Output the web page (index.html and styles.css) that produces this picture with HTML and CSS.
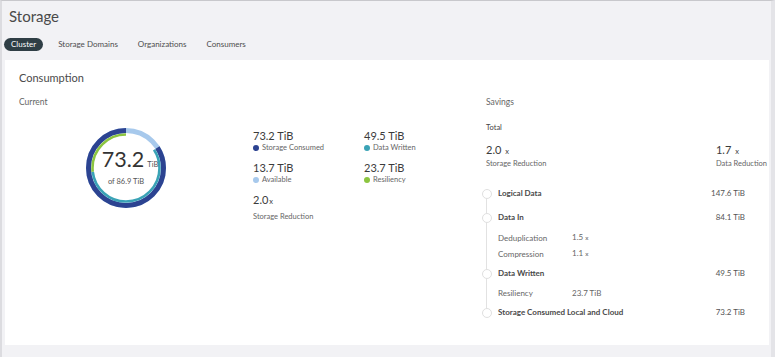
FILE: index.html
```html
<!DOCTYPE html>
<html lang="en">
<head>
    <title>Storage</title>
    <meta charset="utf-8" />
    <link rel="stylesheet" href="styles.css">
</head>
<body>

<div class="page">
    <h1 class="title">Storage</h1>
    <ul class="tabs">
        <li class="cur">Cluster</li>
        <li>Storage Domains</li>
        <li>Organizations</li>
        <li>Consumers</li>
    </ul>

    <div class="card">
        <h2 class="card-title">Consumption</h2>
        <div class="cols">
            <div class="current">
                <p class="sub">Current</p>
                <div class="current-body">
                    <div class="donut">
                        <svg width="80" height="80" viewBox="0 0 80 80">
                            <!-- outer: available + consumed -->
                            <circle cx="40" cy="40" r="37.5" fill="none" stroke="#a7c9ec" stroke-width="5"
                                    stroke-dasharray="235.6 0" transform="rotate(-90 40 40)"/>
                            <circle cx="40" cy="40" r="37.5" fill="none" stroke="#2c4391" stroke-width="5"
                                    stroke-dasharray="198.4 300" stroke-dashoffset="-37.2" transform="rotate(-90 40 40)"/>
                            <!-- inner: written + resiliency -->
                            <circle cx="40" cy="40" r="33.5" fill="none" stroke="#3aa3b6" stroke-width="2.6"
                                    stroke-dasharray="120.6 300" stroke-dashoffset="-33.2" transform="rotate(-90 40 40)"/>
                            <circle cx="40" cy="40" r="33.5" fill="none" stroke="#8cc540" stroke-width="2.6"
                                    stroke-dasharray="56.6 300" stroke-dashoffset="-153.8" transform="rotate(-90 40 40)"/>
                        </svg>
                        <div class="donut-text">
                            <p class="big">73.2<em>TiB</em></p>
                            <p class="of">of 86.9 TiB</p>
                        </div>
                    </div>
                    <div class="stats">
                        <div class="stat">
                            <p class="val">73.2 TiB</p>
                            <p class="lbl"><i class="dot d-consumed"></i>Storage Consumed</p>
                        </div>
                        <div class="stat">
                            <p class="val">49.5 TiB</p>
                            <p class="lbl"><i class="dot d-written"></i>Data Written</p>
                        </div>
                        <div class="stat">
                            <p class="val">13.7 TiB</p>
                            <p class="lbl"><i class="dot d-avail"></i>Available</p>
                        </div>
                        <div class="stat">
                            <p class="val">23.7 TiB</p>
                            <p class="lbl"><i class="dot d-resil"></i>Resiliency</p>
                        </div>
                        <div class="stat">
                            <p class="val">2.0<em>x</em></p>
                            <p class="lbl">Storage Reduction</p>
                        </div>
                    </div>
                </div>
            </div>

            <div class="savings">
                <p class="sub">Savings</p>
                <p class="total">Total</p>
                <div class="totals">
                    <div>
                        <p class="val">2.0 <em>x</em></p>
                        <p class="lbl">Storage Reduction</p>
                    </div>
                    <div>
                        <p class="val">1.7 <em>x</em></p>
                        <p class="lbl">Data Reduction</p>
                    </div>
                </div>
                <ul class="timeline">
                    <li class="step"><span>Logical Data</span><span class="num">147.6 TiB</span></li>
                    <li class="step"><span>Data In</span><span class="num">84.1 TiB</span></li>
                    <li class="detail"><span>Deduplication</span><span>1.5 <em>x</em></span></li>
                    <li class="detail"><span>Compression</span><span>1.1 <em>x</em></span></li>
                    <li class="step"><span>Data Written</span><span class="num">49.5 TiB</span></li>
                    <li class="detail"><span>Resiliency</span><span>23.7 TiB</span></li>
                    <li class="step"><span>Storage Consumed Local and Cloud</span><span class="num">73.2 TiB</span></li>
                </ul>
            </div>
        </div>
    </div>
</div>

</body>
</html>
```

FILE: styles.css
```css
*{margin:0;padding:0;box-sizing:border-box;}
li{list-style-type:none;}
em{font-style:normal;}

html,body{width:100%;height:100%;overflow:hidden;}
body{background:#f2f2f5;font-family:Lato,"Open Sans",sans-serif;color:#565656;}

.page{height:100%;border-top:1px solid #c8c8cc;border-left:2px solid #dcdce0;border-right:4px solid #e4e4e8;}

.title{font-size:15px;font-weight:400;color:#4a4a4a;line-height:20px;padding:5px 0 0 7px;height:31px;}

.tabs{display:flex;align-items:center;padding-left:2px;height:27px;padding-bottom:3px;}
.tabs li{font-size:8px;line-height:13px;padding:0 8px;margin-right:4px;border-radius:7px;color:#4d4d4d;}
.tabs li.cur{background:#2f3e45;color:#fff;padding:0 7px;margin-right:7px;}

.card{background:#fff;margin:1px 2px 0 3px;height:285px;padding:11px 2px 0 14px;}
.card-title{font-size:11px;font-weight:400;color:#4a4a4a;line-height:14px;}

.cols{display:flex;margin-top:11px;}
.current{width:467px;}
.savings{flex:1;}

.sub{font-size:8.5px;line-height:12px;color:#666;}

.current-body{display:flex;margin-top:15px;}
.donut{position:relative;width:80px;height:80px;margin-left:67px;margin-top:5px;}
.donut svg{display:block;}
.donut-text{position:absolute;left:0;top:0;width:80px;height:80px;display:flex;flex-direction:column;align-items:center;justify-content:center;}
.donut-text .big{font-size:21.5px;line-height:21px;color:#333;padding-left:8px;}
.donut-text .big em{font-size:7.5px;color:#555;margin-left:3px;}
.donut-text .of{font-size:7.5px;line-height:10px;color:#555;margin-top:2px;}

.stats{display:grid;grid-template-columns:111px 100px;row-gap:8px;margin-left:87px;margin-top:6px;align-content:start;}
.val{font-size:11px;line-height:13px;color:#3b3b3b;}
.val em{font-size:7.5px;margin-left:1px;}
.lbl{font-size:7.5px;line-height:10px;color:#666;margin-top:1px;display:flex;align-items:center;}
.stat:last-child .lbl{margin-top:4px;}
.dot{display:inline-block;width:6px;height:6px;border-radius:50%;margin-right:3px;}
.d-consumed{background:#2c4391;}
.d-written{background:#3aa3b6;}
.d-avail{background:#a7c9ec;}
.d-resil{background:#8cc540;}

.total{font-size:7.5px;line-height:10px;color:#444;margin-top:15px;}
.totals{display:flex;justify-content:space-between;margin-top:10px;}
.totals .lbl{margin-top:1px;}

/* timeline rows: heights set so the dots land on the reference rows */
.timeline{position:relative;margin-top:12px;}
.timeline:before{content:"";position:absolute;left:0;top:12px;bottom:9px;width:1px;background:#e2e2e2;}
.timeline li{display:flex;align-items:center;position:relative;font-size:8px;line-height:12px;padding-left:12px;}
.step{font-weight:700;color:#4a4a4a;justify-content:space-between;padding-right:22px;}
.step .num{font-weight:400;color:#555;}
.step:before{content:"";position:absolute;left:-4px;top:50%;margin-top:-4px;width:8px;height:8px;border-radius:50%;background:#fff;border:1px solid #e0e0e0;}
.detail{color:#666;}
.detail span:first-child{width:74px;}
.detail em{font-size:6.5px;color:#666;}
.timeline li:nth-child(1){height:24px;}
.timeline li:nth-child(2){height:23px;}
.timeline li:nth-child(3){height:17px;padding-top:2px;}
.timeline li:nth-child(4){height:17px;}
.timeline li:nth-child(5){height:21px;}
.timeline li:nth-child(6){height:20px;}
.timeline li:nth-child(7){height:18px;}
```
